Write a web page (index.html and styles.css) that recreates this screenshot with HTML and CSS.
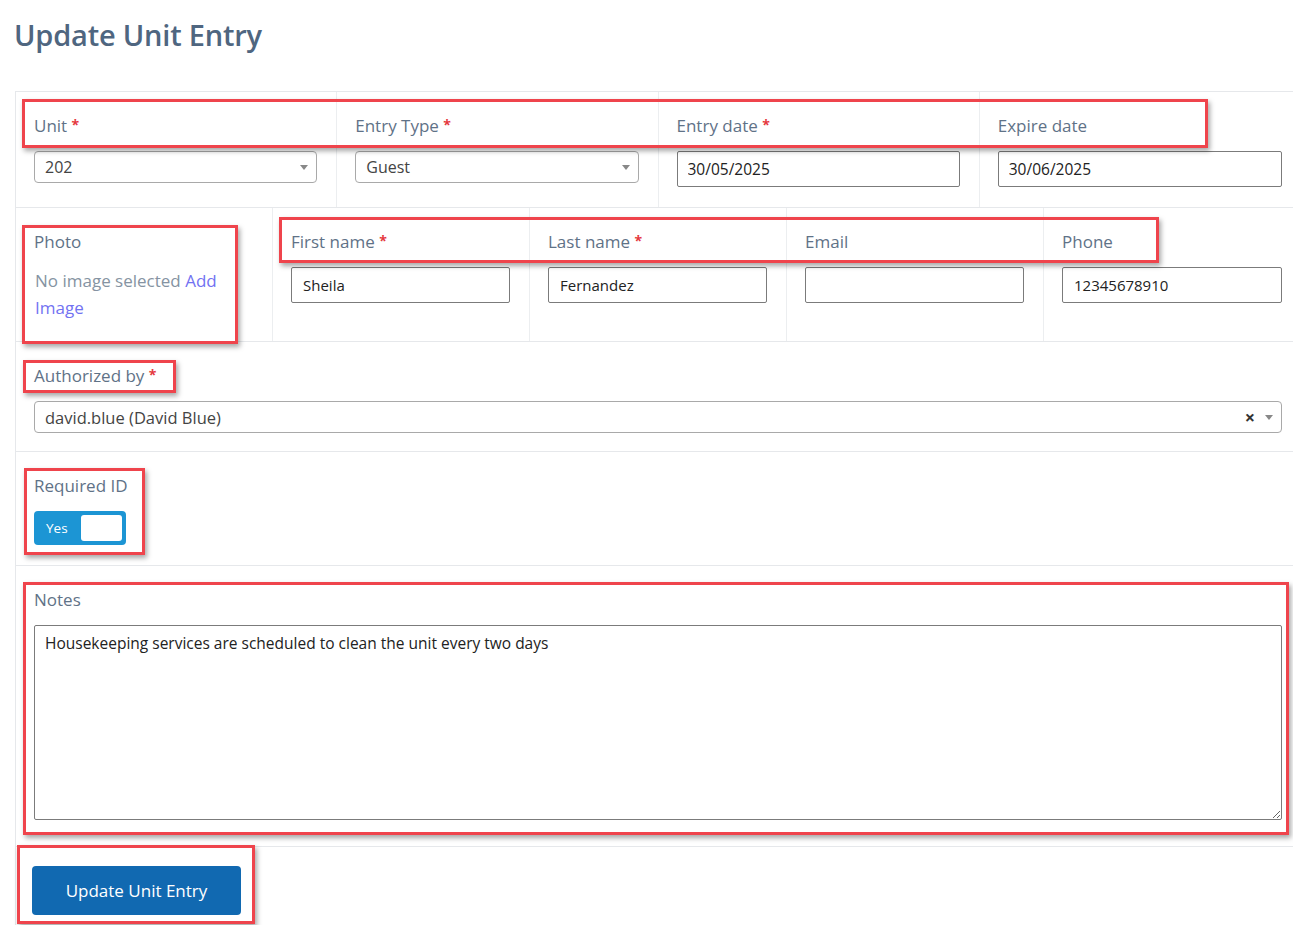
FILE: index.html
```html
<!DOCTYPE html>
<html lang="en">
<head>
<meta charset="utf-8">
<title>Update Unit Entry</title>
<link rel="stylesheet" href="styles.css">
</head>
<body>
<main class="page">
  <h1 class="title">Update Unit Entry</h1>

  <form class="form" onsubmit="return false">
    <div class="row cols-4">
      <div class="cell">
        <label class="lbl">Unit <span class="req">*</span></label>
        <div class="select2"><span class="sel-text">202</span><span class="caret"></span></div>
      </div>
      <div class="cell">
        <label class="lbl">Entry Type <span class="req">*</span></label>
        <div class="select2"><span class="sel-text">Guest</span><span class="caret"></span></div>
      </div>
      <div class="cell">
        <label class="lbl">Entry date <span class="req">*</span></label>
        <input class="field field-date" type="text" value="30/05/2025">
      </div>
      <div class="cell">
        <label class="lbl">Expire date</label>
        <input class="field field-date" type="text" value="30/06/2025">
      </div>
    </div>

    <div class="row cols-5">
      <div class="cell">
        <label class="lbl">Photo</label>
        <p class="photo-note">No image selected <a class="link" href="#">Add Image</a></p>
      </div>
      <div class="cell">
        <label class="lbl">First name <span class="req">*</span></label>
        <input class="field" type="text" value="Sheila">
      </div>
      <div class="cell">
        <label class="lbl">Last name <span class="req">*</span></label>
        <input class="field" type="text" value="Fernandez">
      </div>
      <div class="cell">
        <label class="lbl">Email</label>
        <input class="field" type="text" value="">
      </div>
      <div class="cell">
        <label class="lbl">Phone</label>
        <input class="field" type="text" value="12345678910">
      </div>
    </div>

    <div class="row">
      <div class="cell cell-tight">
        <label class="lbl">Authorized by <span class="req">*</span></label>
        <div class="select2 select2-wide"><span class="sel-text">david.blue (David Blue)</span><span class="clear">&times;</span><span class="caret"></span></div>
      </div>
    </div>

    <div class="row">
      <div class="cell">
        <label class="lbl">Required ID</label>
        <div class="toggle"><span class="toggle-text">Yes</span><span class="knob"></span></div>
      </div>
    </div>

    <div class="row">
      <div class="cell cell-notes">
        <label class="lbl">Notes</label>
        <textarea class="notes">Housekeeping services are scheduled to clean the unit every two days</textarea>
      </div>
    </div>

    <div class="actions">
      <button class="btn" type="submit">Update Unit Entry</button>
    </div>
  </form>

  <!-- highlight frames drawn over the form -->
  <div class="mark mark-row1"></div>
  <div class="mark mark-photo"></div>
  <div class="mark mark-names"></div>
  <div class="mark mark-auth"></div>
  <div class="mark mark-reqid"></div>
  <div class="mark mark-notes"></div>
  <div class="mark mark-btn"></div>
</main>
</body>
</html>
```

FILE: styles.css
```css
html, body {
  margin: 0;
  padding: 0;
  background: #fff;
  overflow: hidden;
}

body {
  font-family: "Open Sans", "Noto Sans", sans-serif;
  color: #333;
}

.page {
  position: relative;
  width: 1293px;
  height: 925px;
  padding-left: 15px;
  box-sizing: border-box;
}

.title {
  margin: 0 0 37px -1px;
  padding-top: 16px;
  font-size: 29px;
  line-height: 38px;
  font-weight: 600;
  color: #4f6680;
  letter-spacing: -0.2px;
}

.form {
  width: 1285px;
  border-top: 1px solid #e6e8eb;
  border-left: 1px solid #e6e8eb;
  height: 840px;
}

.row {
  display: grid;
  grid-template-columns: 1fr;
  border-bottom: 1px solid #e6e8eb;
}

.cols-4 { grid-template-columns: repeat(4, 1fr); }
.cols-5 { grid-template-columns: repeat(5, 1fr); }

.cell {
  padding: 22px 19px 20px 18px;
  border-right: 1px solid #eceef0;
  min-width: 0;
}

.cell:last-child { border-right: 0; }

.cell-tight { padding-bottom: 18px; }
.cell-notes { padding-bottom: 26px; }

.lbl {
  display: block;
  height: 24px;
  margin-bottom: 13px;
  font-size: 17px;
  line-height: 24px;
  font-weight: 500;
  color: #5f7287;
}

.req {
  color: #e5393f;
  font-size: 14px;
  font-weight: 700;
  position: relative;
  top: -2px;
}

/* select2-like single select */
.select2 {
  display: flex;
  align-items: center;
  height: 32px;
  box-sizing: border-box;
  border: 1px solid #a9a9a9;
  border-radius: 4px;
  padding: 0 8px 0 10px;
  font-size: 16px;
  color: #444;
}

.select2-wide { font-size: 16.5px; }

.sel-text { flex: 1; }

.caret {
  width: 0;
  height: 0;
  border-left: 4px solid transparent;
  border-right: 4px solid transparent;
  border-top: 5px solid #888;
  margin-top: 1px;
}

.clear {
  font-size: 18px;
  font-weight: 700;
  color: #333;
  margin-right: 10px;
  line-height: 1;
}

.field {
  display: block;
  width: 100%;
  height: 36px;
  box-sizing: border-box;
  border: 1px solid #7b7b7b;
  border-radius: 2px;
  padding: 0 11px;
  font-family: inherit;
  font-size: 15px;
  color: #222;
  background: #fff;
}

.field-date { padding-left: 10px; font-size: 15.5px; }

.photo-note {
  margin: 0 0 0 1px;
  font-size: 17px;
  line-height: 27px;
  color: #8593a2;
}

.link {
  color: #7272f2;
  text-decoration: none;
}

.toggle {
  display: flex;
  align-items: center;
  justify-content: space-between;
  width: 92px;
  height: 34px;
  box-sizing: border-box;
  padding: 4px;
  background: #1c95d4;
  border-radius: 4px;
}

.toggle-text {
  padding-left: 8px;
  font-size: 13.5px;
  font-weight: 500;
  color: #fff;
}

.knob {
  width: 41px;
  height: 26px;
  background: #fff;
  border-radius: 3px;
}

.notes {
  display: block;
  width: 100%;
  height: 195px;
  box-sizing: border-box;
  border: 1px solid #7b7b7b;
  border-radius: 2px;
  padding: 7px 10px;
  font-family: inherit;
  font-size: 15.5px;
  line-height: 20px;
  color: #222;
  resize: vertical;
}

.actions {
  padding: 19px 0 0 16px;
}

.btn {
  width: 209px;
  height: 49px;
  border: 0;
  border-radius: 4px;
  background: #1169b1;
  color: #fff;
  font-family: inherit;
  font-size: 17px;
}

/* highlight frames */
.mark {
  position: absolute;
  box-sizing: border-box;
  border: 3px solid #ef444c;
  box-shadow: 2px 3px 5px rgba(0, 0, 0, 0.35);
  pointer-events: none;
}

.mark-row1  { left: 22px;  top: 99px;  width: 1186px; height: 49px; }
.mark-photo { left: 22px;  top: 225px; width: 216px;  height: 119px; }
.mark-names { left: 279px; top: 217px; width: 880px;  height: 46px; }
.mark-auth  { left: 23px;  top: 360px; width: 153px;  height: 33px; }
.mark-reqid { left: 24px;  top: 468px; width: 121px;  height: 87px; }
.mark-notes { left: 23px;  top: 582px; width: 1266px; height: 253px; }
.mark-btn   { left: 17px;  top: 845px; width: 238px;  height: 79px; }
```
